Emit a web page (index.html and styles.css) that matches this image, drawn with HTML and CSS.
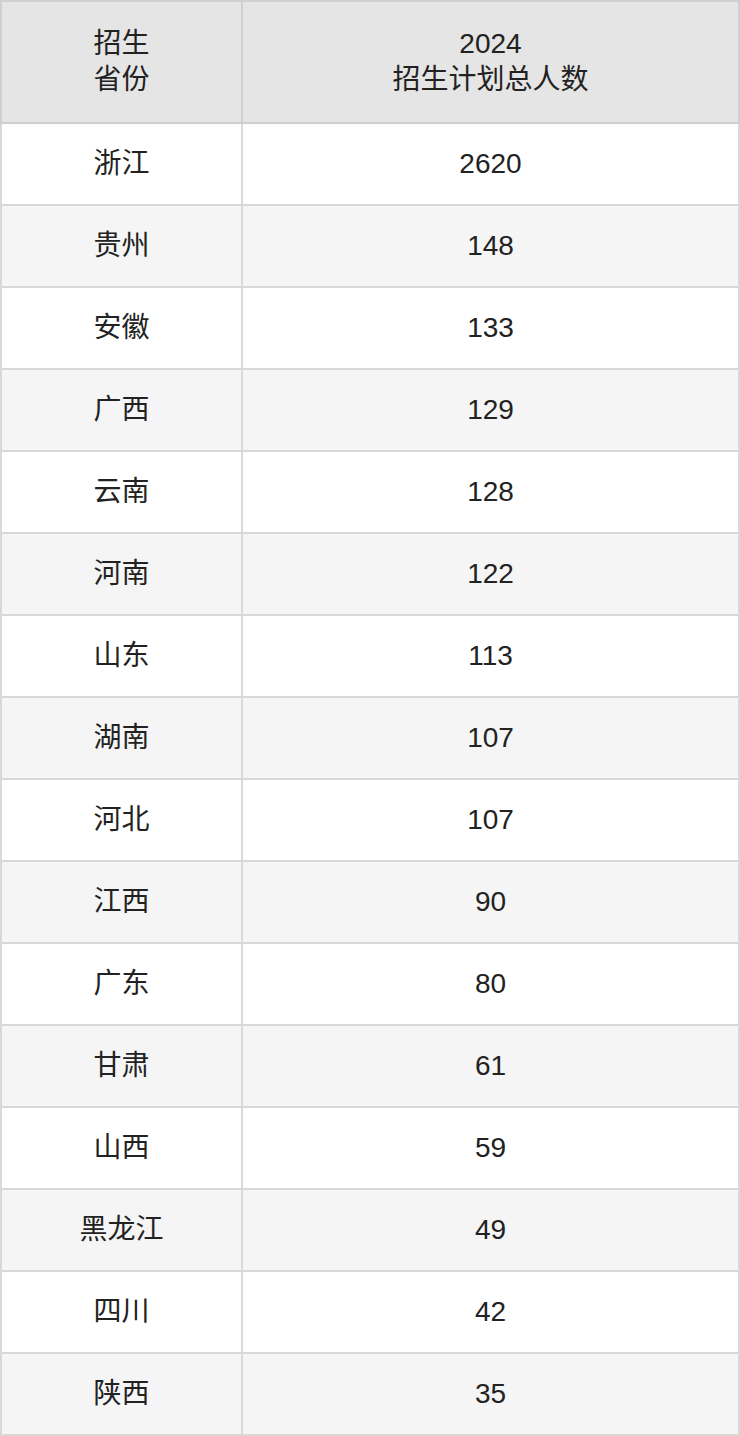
FILE: index.html
```html
<!DOCTYPE html>
<html lang="zh">
<head>
<meta charset="utf-8">
<link rel="stylesheet" href="styles.css">
</head>
<body>
<table class="plan">
  <colgroup><col class="c1"><col class="c2"></colgroup>
  <thead>
    <tr><th>招生<br>省份</th><th>2024<br>招生计划总人数</th></tr>
  </thead>
  <tbody>
    <tr><td>浙江</td><td>2620</td></tr>
    <tr><td>贵州</td><td>148</td></tr>
    <tr><td>安徽</td><td>133</td></tr>
    <tr><td>广西</td><td>129</td></tr>
    <tr><td>云南</td><td>128</td></tr>
    <tr><td>河南</td><td>122</td></tr>
    <tr><td>山东</td><td>113</td></tr>
    <tr><td>湖南</td><td>107</td></tr>
    <tr><td>河北</td><td>107</td></tr>
    <tr><td>江西</td><td>90</td></tr>
    <tr><td>广东</td><td>80</td></tr>
    <tr><td>甘肃</td><td>61</td></tr>
    <tr><td>山西</td><td>59</td></tr>
    <tr><td>黑龙江</td><td>49</td></tr>
    <tr><td>四川</td><td>42</td></tr>
    <tr><td>陕西</td><td>35</td></tr>
  </tbody>
</table>
</body>
</html>
```

FILE: styles.css
```css
html, body {
  margin: 0;
  padding: 0;
  background: #ffffff;
}
.plan {
  width: 740px;
  border-collapse: collapse;
  table-layout: fixed;
  font-family: "Liberation Sans", "Noto Sans CJK SC", sans-serif;
  font-size: 28px;
  color: #222222;
}
.c1 { width: 241px; }
.c2 { width: 497px; }
.plan th, .plan td {
  border: 2px solid #d9d9d9;
  text-align: center;
  vertical-align: middle;
  padding: 0;
  font-weight: normal;
}
.plan th {
  background: #e5e5e5;
  height: 120px;
  line-height: 36px;
  border-color: #d0d0d0;
}
.plan td {
  height: 80px;
  line-height: 36px;
}
.plan tbody tr:nth-child(even) td {
  background: #f5f5f5;
}
```
